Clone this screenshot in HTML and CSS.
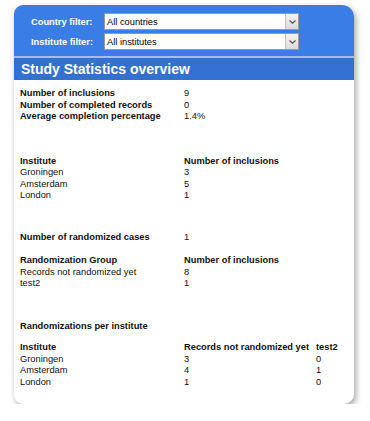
FILE: index.html
```html
<!DOCTYPE html>
<html lang="en">
<head>
    <meta charset="UTF-8">
    <title>Study Statistics overview</title>
    <link rel="stylesheet" href="styles.css">
</head>
<body>
    <div class="card">
        <div class="filters">
            <div class="filter-row">
                <span class="filter-label">Country filter:</span>
                <div class="select"><span class="select-text">All countries</span><span class="select-arrow"><svg width="7" height="4" viewBox="0 0 7 4"><path d="M0.5 0.5 L3.5 3.2 L6.5 0.5" fill="none" stroke="#555" stroke-width="1.2"/></svg></span></div>
            </div>
            <div class="filter-row">
                <span class="filter-label">Institute filter:</span>
                <div class="select"><span class="select-text">All institutes</span><span class="select-arrow"><svg width="7" height="4" viewBox="0 0 7 4"><path d="M0.5 0.5 L3.5 3.2 L6.5 0.5" fill="none" stroke="#555" stroke-width="1.2"/></svg></span></div>
            </div>
        </div>
        <h1 class="title">Study Statistics overview</h1>

        <div class="content">
            <div class="stats two-col block-first">
                <b>Number of inclusions</b><span>9</span>
                <b>Number of completed records</b><span>0</span>
                <b>Average completion percentage</b><span>1.4%</span>
            </div>

            <div class="stats two-col block-institutes">
                <b>Institute</b><b>Number of inclusions</b>
                <span>Groningen</span><span>3</span>
                <span>Amsterdam</span><span>5</span>
                <span>London</span><span>1</span>
            </div>

            <div class="stats two-col block-randomized">
                <b>Number of randomized cases</b><span>1</span>
            </div>

            <div class="stats two-col block-groups">
                <b>Randomization Group</b><b>Number of inclusions</b>
                <span>Records not randomized yet</span><span>8</span>
                <span>test2</span><span>1</span>
            </div>

            <div class="section-title">Randomizations per institute</div>

            <div class="stats three-col">
                <b>Institute</b><b>Records not randomized yet</b><b>test2</b>
                <span>Groningen</span><span>3</span><span>0</span>
                <span>Amsterdam</span><span>4</span><span>1</span>
                <span>London</span><span>1</span><span>0</span>
            </div>
        </div>
    </div>
</body>
</html>
```

FILE: styles.css
```css
body {
    margin: 0;
    background: #fff;
    font-family: "Liberation Sans", Arial, sans-serif;
    font-size: 9.3px;
    color: #111;
}
.card {
    width: 340px;
    margin: 5px 0 0 14px;
    background: #fff;
    border-radius: 9px 12px 10px 9px;
    box-shadow: 2px 3px 6px rgba(0,0,0,0.35);
    overflow: hidden;
}
.filters {
    background: #3b7de6;
    padding: 8px 0 6px 17px;
    display: flex;
    flex-direction: column;
    gap: 3px;
    border-bottom: 2px solid #a3bfe8;
}
.filter-row {
    display: flex;
    align-items: center;
}
.filter-label {
    width: 73px;
    color: #fff;
    font-weight: bold;
}
.select {
    width: 193px;
    height: 15px;
    background: #fff;
    border: 1px solid #9a9a9a;
    display: flex;
    align-items: center;
}
.select-text {
    flex: 1;
    padding-left: 2px;
    color: #000;
}
.select-arrow {
    width: 12px;
    height: 15px;
    background: linear-gradient(#f2f2f2, #dcdcdc);
    border-left: 1px solid #c4c4c4;
    display: flex;
    align-items: center;
    justify-content: center;
}
.title {
    margin: 0;
    height: 22px;
    line-height: 22px;
    padding-left: 7px;
    background: #3470d0;
    color: #fff;
    font-size: 14px;
    font-weight: bold;
}
.content {
    padding: 8px 6px 16px 6px;
    line-height: 11.5px;
}
.stats {
    display: grid;
}
.two-col {
    grid-template-columns: 164px auto;
}
.three-col {
    grid-template-columns: 164px 132px auto;
}
.block-institutes {
    margin-top: 33px;
}
.block-randomized {
    margin-top: 30px;
}
.block-groups {
    margin-top: 12px;
}
.section-title {
    margin-top: 31px;
    font-weight: bold;
}
.three-col {
    margin-top: 10px;
}
```
